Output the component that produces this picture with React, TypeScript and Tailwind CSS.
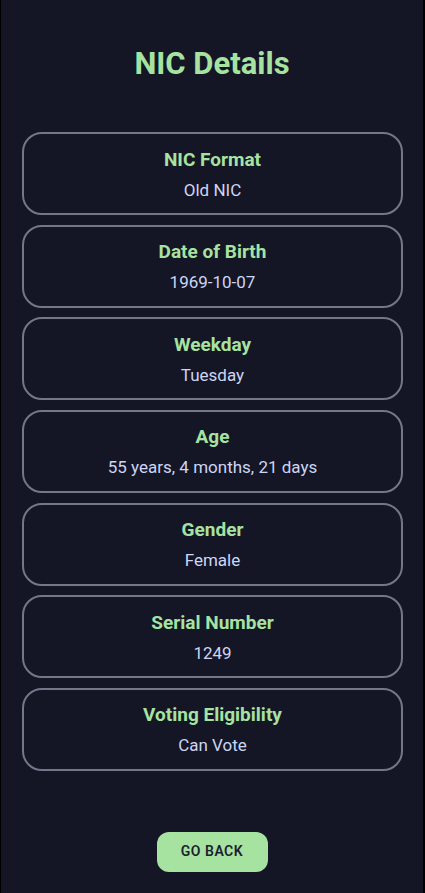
const details = [
  { label: "NIC Format", value: "Old NIC" },
  { label: "Date of Birth", value: "1969-10-07" },
  { label: "Weekday", value: "Tuesday" },
  { label: "Age", value: "55 years, 4 months, 21 days" },
  { label: "Gender", value: "Female" },
  { label: "Serial Number", value: "1249" },
  { label: "Voting Eligibility", value: "Can Vote" },
];

export default function App() {
  return (
    <div
      className="min-h-[893px] bg-[#141525] border-l border-r-2 border-black flex flex-col items-center"
      style={{ fontFamily: "Roboto, 'Noto Sans', sans-serif" }}
    >
      <h1 className="mt-[44px] text-[31px] leading-[40px] font-bold text-[#a6e3a1]">NIC Details</h1>
      <div className="mt-[48px] w-full pl-[21px] pr-[20px] flex flex-col gap-[9.67px]">
        {details.map((d) => (
          <div
            key={d.label}
            className="h-[83px] rounded-[20px] border-2 border-[#74768a] flex flex-col items-center justify-center gap-[7px] pt-[1px]"
          >
            <div className="text-[19px] leading-[24px] font-bold text-[#a6e3a1]">{d.label}</div>
            <div className="text-[17px] leading-[22px] text-[#cdd6f4]">{d.value}</div>
          </div>
        ))}
      </div>
      <button className="mt-[61px] w-[111px] h-[40px] rounded-[12px] bg-[#a6e3a1] text-[14px] font-semibold tracking-[0.5px] text-[#1e1e2e]">
        GO BACK
      </button>
    </div>
  );
}
